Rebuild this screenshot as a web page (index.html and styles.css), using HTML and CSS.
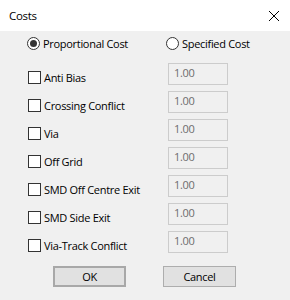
FILE: index.html
```html
<!DOCTYPE html>
<html>
<head>
    <title>Costs</title>
    <link rel="stylesheet" href="styles.css">
</head>
<body>

    <div class="dialog">
        <div class="titlebar">
            <span class="title">Costs</span>
            <svg class="close" width="12" height="12" viewBox="0 0 12 12">
                <path d="M1 1 L11 11 M11 1 L1 11" stroke="#000" stroke-width="1" fill="none"/>
            </svg>
        </div>

        <div class="modes">
            <label class="radio mode-first"><span class="dot checked"></span>Proportional Cost</label>
            <label class="radio mode-second"><span class="dot"></span>Specified Cost</label>
        </div>

        <div class="costs">
            <div class="row">
                <label class="check"><span class="box"></span>Anti Bias</label>
                <span class="field">1.00</span>
            </div>
            <div class="row">
                <label class="check"><span class="box"></span>Crossing Conflict</label>
                <span class="field">1.00</span>
            </div>
            <div class="row">
                <label class="check"><span class="box"></span>Via</label>
                <span class="field">1.00</span>
            </div>
            <div class="row">
                <label class="check"><span class="box"></span>Off Grid</label>
                <span class="field">1.00</span>
            </div>
            <div class="row">
                <label class="check"><span class="box"></span>SMD Off Centre Exit</label>
                <span class="field">1.00</span>
            </div>
            <div class="row">
                <label class="check"><span class="box"></span>SMD Side Exit</label>
                <span class="field">1.00</span>
            </div>
            <div class="row">
                <label class="check"><span class="box"></span>Via-Track Conflict</label>
                <span class="field">1.00</span>
            </div>
        </div>

        <div class="buttons">
            <button class="btn btn-default">OK</button>
            <button class="btn">Cancel</button>
        </div>
    </div>

</body>
</html>
```

FILE: styles.css
```css
body {
    margin: 0;
    font-family: "Open Sans", "Liberation Sans", sans-serif;
    font-size: 11px;
    letter-spacing: -0.3px;
    color: #000;
}

.dialog {
    width: 290px;
    height: 300px;
    background-color: #f0f0f0;
}

.titlebar {
    height: 31px;
    background-color: #fff;
    display: flex;
    align-items: center;
    justify-content: space-between;
    padding: 0 10px 0 9px;
    box-sizing: border-box;
}

.title {
    font-size: 11.5px;
}

.close {
    margin-top: 1px;
}

.modes {
    height: 24px;
    display: flex;
    align-items: center;
}

.radio {
    display: flex;
    align-items: center;
}

.mode-first {
    margin-left: 27px;
    width: 139px;
}

.dot {
    width: 11px;
    height: 11px;
    border: 1px solid #333;
    border-radius: 50%;
    background-color: #fff;
    margin-right: 3px;
    display: flex;
    align-items: center;
    justify-content: center;
}

.dot.checked::after {
    content: "";
    width: 7px;
    height: 7px;
    border-radius: 50%;
    background-color: #333;
}

.costs {
    margin-top: 7px;
}

.row {
    height: 28px;
    display: flex;
    align-items: flex-start;
}

.check {
    width: 140px;
    margin-left: 28px;
    margin-top: 9px;
    display: flex;
    align-items: center;
    line-height: 13px;
}

.box {
    width: 11px;
    height: 11px;
    border: 1px solid #333;
    background-color: #fff;
    margin-right: 3px;
    flex-shrink: 0;
}

.field {
    width: 53px;
    height: 20px;
    margin-top: 1px;
    padding-left: 5px;
    border: 1px solid #ccc;
    color: #6d6d6d;
    line-height: 17px;
}

.buttons {
    margin-top: 8px;
    display: flex;
    padding-left: 53px;
    gap: 37px;
}

.btn {
    width: 73px;
    height: 21px;
    box-sizing: border-box;
    border: 1px solid #adadad;
    background-color: #e1e1e1;
    font-family: "Open Sans", "Liberation Sans", sans-serif;
    font-size: 11px;
    letter-spacing: -0.3px;
    color: #000;
    padding: 0;
}

.btn-default {
    border: 2px solid #a8a8a8;
}
```
